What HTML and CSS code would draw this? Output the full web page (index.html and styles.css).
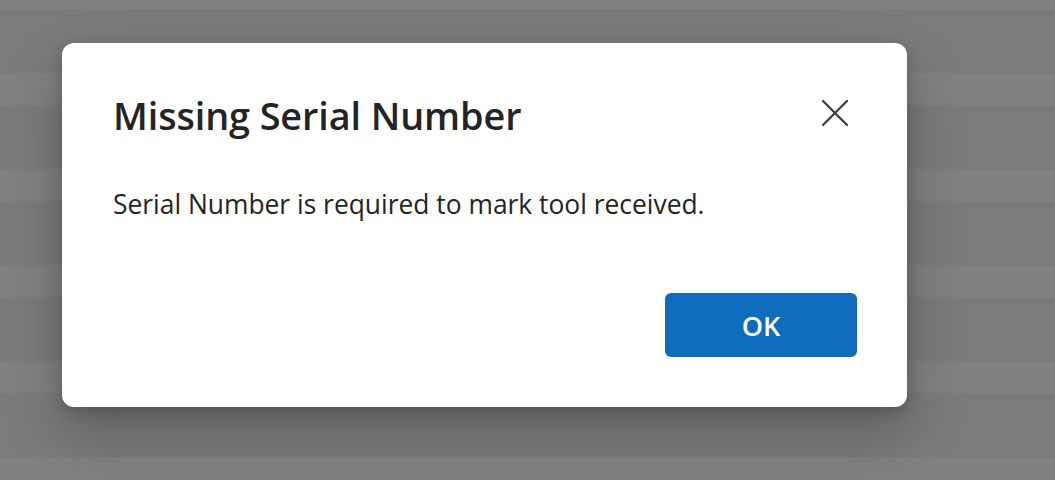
FILE: index.html
```html
<!DOCTYPE html>
<html lang="en">
<head>
<meta charset="utf-8">
<title>Missing Serial Number</title>
<link rel="stylesheet" href="styles.css">
</head>
<body>
<div class="overlay">
  <div class="dialog" role="dialog" aria-labelledby="dlg-title">
    <div class="dialog-header">
      <h1 class="dialog-title" id="dlg-title">Missing Serial Number</h1>
      <button class="close-btn" type="button" aria-label="Close">
        <svg width="26" height="26" viewBox="0 0 26 26" aria-hidden="true">
          <path d="M1 1 L25 25 M25 1 L1 25" stroke="#3b3b3b" stroke-width="2.2" stroke-linecap="round" fill="none"/>
        </svg>
      </button>
    </div>
    <p class="dialog-body">Serial Number is required to mark tool received.</p>
    <div class="dialog-footer">
      <button class="ok-btn" type="button">OK</button>
    </div>
  </div>
</div>
</body>
</html>
```
FILE: styles.css
```css
html, body {
  margin: 0;
  padding: 0;
  height: 100%;
}
body {
  font-family: "Open Sans", "Noto Sans", "Liberation Sans", sans-serif;
  background-color: #7b7b7b;
  background-image: repeating-linear-gradient(
    to bottom,
    #7b7b7b 0px, #7b7b7b 64px,
    #818181 64px, #818181 96px
  );
  background-position: 0 9px;
  overflow: hidden;
}
.overlay {
  height: 100%;
  padding: 43px 0 0 62px;
  box-sizing: border-box;
}
.dialog {
  width: 845px;
  height: 364px;
  box-sizing: border-box;
  background: #ffffff;
  border-radius: 12px;
  padding: 48px 50px 50px 51px;
  display: flex;
  flex-direction: column;
  box-shadow: 0 26px 58px rgba(0, 0, 0, 0.22), 0 5px 15px rgba(0, 0, 0, 0.18);
}
.dialog-header {
  display: flex;
  align-items: flex-start;
  justify-content: space-between;
}
.dialog-title {
  margin: 3px 0 0;
  font-size: 37.8px;
  font-weight: 600;
  line-height: 44px;
  color: #242424;
  letter-spacing: -0.1px;
}
.close-btn {
  width: 44px;
  height: 44px;
  border: 0;
  background: transparent;
  padding: 0;
  display: flex;
  align-items: center;
  justify-content: center;
}
.dialog-body {
  margin: 48px 0 0;
  font-size: 26.4px;
  line-height: 36px;
  color: #242424;
}
.dialog-footer {
  margin-top: auto;
  display: flex;
  justify-content: flex-end;
}
.ok-btn {
  width: 192px;
  height: 64px;
  border: 0;
  border-radius: 6px;
  background: #0f6cbd;
  color: #ffffff;
  font-family: inherit;
  font-size: 27px;
  font-weight: 600;
  padding: 0;
}
```
